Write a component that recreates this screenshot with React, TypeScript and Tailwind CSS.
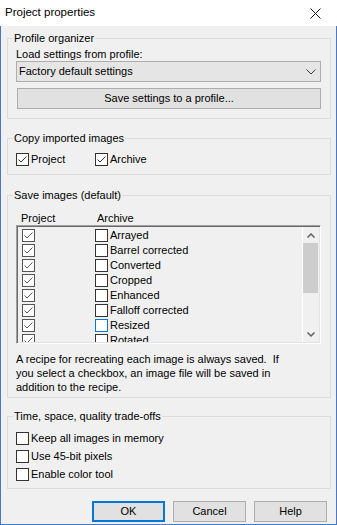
import React from "react";

type CheckProps = { checked?: boolean; tone?: "normal" | "dim" | "hover" };

function Check({ checked = false, tone = "normal" }: CheckProps) {
    const border =
        tone === "hover" ? "border-[#0078d7]" : tone === "dim" ? "border-[#555555]" : "border-[#333333]";
    const stroke = tone === "dim" ? "#5a5a5a" : "#333333";
    return (
        <span className={`inline-flex w-[13px] h-[13px] shrink-0 border bg-white items-center justify-center ${border}`}>
            {checked ? (
                <svg width="11" height="11" viewBox="0 0 11 11">
                    <polyline points="1.5,5.5 4,8 9.5,2.5" fill="none" stroke={stroke} strokeWidth="1" />
                </svg>
            ) : null}
        </span>
    );
}

function Group({ title, className = "", children }: { title: string; className?: string; children: React.ReactNode }) {
    return (
        <fieldset className={`border border-[#dcdcdc] w-[324px] ${className}`}>
            <legend className="ml-[5px] px-[1px] leading-[14px]">{title}</legend>
            {children}
        </fieldset>
    );
}

const rows = [
    { name: "Arrayed" },
    { name: "Barrel corrected" },
    { name: "Converted" },
    { name: "Cropped" },
    { name: "Enhanced" },
    { name: "Falloff corrected" },
    { name: "Resized", hover: true },
    { name: "Rotated" },
];

export default function App() {
    return (
        <div className="w-[337px] h-[525px] flex flex-col bg-white text-black text-[11px] font-['Liberation_Sans',Arial,sans-serif] overflow-hidden">
            {/* title bar */}
            <div className="h-[26px] shrink-0 bg-white flex items-center justify-between">
                <span className="pl-[5px] text-[11.5px]">Project properties</span>
                <span className="w-[46px] h-[26px] flex items-center justify-center mr-[-1px]">
                    <svg width="11" height="11" viewBox="0 0 11 11">
                        <path d="M0.5 0.5 L10.5 10.5 M10.5 0.5 L0.5 10.5" stroke="#1a1a1a" strokeWidth="1" />
                    </svg>
                </span>
            </div>

            {/* body */}
            <div className="flex-1 bg-[#f0f0f0] border-l border-r border-b border-[#4a78c8] pl-[6px] pr-[5px] pt-[5px] flex flex-col">
                <Group title="Profile organizer">
                    <div className="pl-[8px] pr-[9px] pb-[9px]">
                        <div className="mt-[2px] leading-[14px]">Load settings from profile:</div>
                        <div className="h-[21px] border border-[#adadad] bg-[#e5e5e5] flex items-center justify-between pl-[2px] pr-[4px]">
                            <span>Factory default settings</span>
                            <svg width="10" height="6" viewBox="0 0 10 6">
                                <polyline points="0.5,0.5 5,5 9.5,0.5" fill="none" stroke="#3a3a3a" strokeWidth="1" />
                            </svg>
                        </div>
                        <button className="ml-px mt-[6px] w-[304px] h-[21px] border border-[#adadad] bg-[#e1e1e1] flex items-center justify-center">
                            Save settings to a profile...
                        </button>
                    </div>
                </Group>

                <Group title="Copy imported images" className="mt-[12px]">
                    <div className="pl-[8px] mt-[8px] flex h-[13px] items-center leading-[13px]">
                        <div className="w-[79px] flex items-center">
                            <Check checked />
                            <span className="ml-[2px]">Project</span>
                        </div>
                        <div className="flex items-center">
                            <Check checked />
                            <span className="ml-[2px]">Archive</span>
                        </div>
                    </div>
                    <div className="h-[8px]" />
                </Group>

                <Group title="Save images (default)" className="mt-[13px]">
                    <div className="pl-[8px] pr-[9px] pb-[3px]">
                        <div className="mt-[10px] flex leading-[13px] pl-[5px]">
                            <span className="w-[76px]">Project</span>
                            <span>Archive</span>
                        </div>
                        <div className="h-[119px] flex border border-t-[#a0a0a0] border-l-[#a0a0a0] border-r-white border-b-white shadow-[inset_1px_1px_0_#696969,inset_-1px_-1px_0_#e3e3e3] p-[1px] overflow-hidden">
                            <div className="flex-1 pt-[1px] overflow-hidden">
                                {rows.map((r) => (
                                    <div key={r.name} className="h-[15px] flex items-center pl-[4px] leading-[15px]">
                                        <div className="w-[73px] flex">
                                            <Check checked tone="dim" />
                                        </div>
                                        <Check tone={r.hover ? "hover" : "normal"} />
                                        <span className="ml-[2px]">{r.name}</span>
                                    </div>
                                ))}
                            </div>
                            <div className="w-[17px] shrink-0 border-l border-white flex flex-col">
                                <div className="h-[16px] flex items-center justify-center">
                                    <svg width="8" height="5" viewBox="0 0 8 5">
                                        <polyline points="0.5,4.5 4,1 7.5,4.5" fill="none" stroke="#606060" strokeWidth="1.5" />
                                    </svg>
                                </div>
                                <div className="h-[50px] w-[15px] bg-[#cdcdcd]" />
                                <div className="flex-1" />
                                <div className="h-[16px] flex items-center justify-center">
                                    <svg width="8" height="5" viewBox="0 0 8 5">
                                        <polyline points="0.5,0.5 4,4 7.5,0.5" fill="none" stroke="#606060" strokeWidth="1.5" />
                                    </svg>
                                </div>
                            </div>
                        </div>
                        <p className="mt-[8px] leading-[14px] whitespace-pre">
                            {"A recipe for recreating each image is always saved.  If\nyou select a checkbox, an image file will be saved in\naddition to the recipe."}
                        </p>
                    </div>
                </Group>

                <Group title="Time, space, quality trade-offs" className="mt-[11px]">
                    <div className="pl-[8px] mt-[6px] pb-[5px]">
                        {["Keep all images in memory", "Use 45-bit pixels", "Enable color tool"].map((t) => (
                            <div key={t} className="h-[18px] flex items-center">
                                <Check />
                                <span className="ml-[2px]">{t}</span>
                            </div>
                        ))}
                    </div>
                </Group>

                <div className="mt-[12px] flex justify-end gap-[8px] pr-[4px]">
                    <button className="w-[73px] h-[21px] border-2 border-[#0078d7] bg-[#e1e1e1] flex items-center justify-center">OK</button>
                    <button className="w-[73px] h-[21px] border border-[#adadad] bg-[#e1e1e1] flex items-center justify-center">Cancel</button>
                    <button className="w-[73px] h-[21px] border border-[#adadad] bg-[#e1e1e1] flex items-center justify-center">Help</button>
                </div>
            </div>
        </div>
    );
}
